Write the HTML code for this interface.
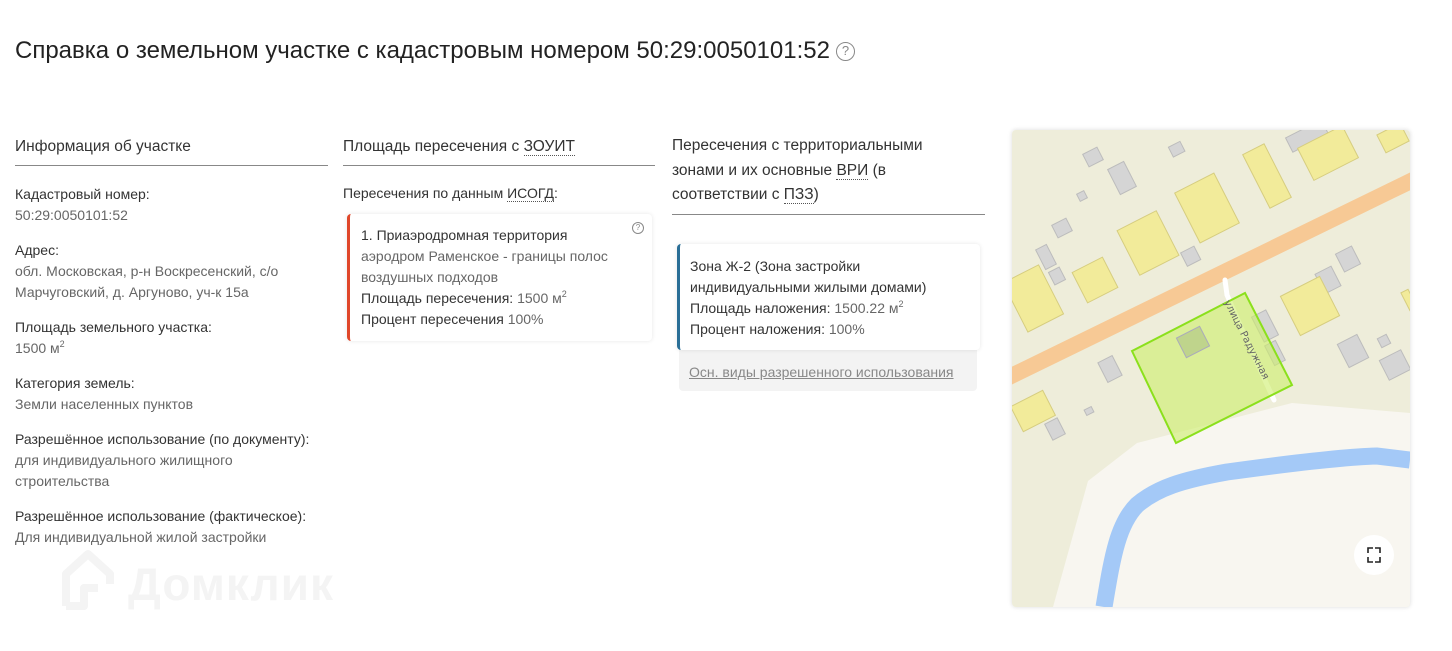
<!DOCTYPE html>
<html><head><meta charset="utf-8"><style>
*{margin:0;padding:0;box-sizing:border-box}
body{width:1452px;height:651px;background:#fff;font-family:"Liberation Sans","DejaVu Sans",sans-serif;color:#333;position:relative;overflow:hidden}
.abs{position:absolute}
h1{position:absolute;left:15px;top:37px;font-size:24px;font-weight:normal;color:#222;white-space:nowrap;letter-spacing:0px}
.q{display:inline-block;width:19px;height:19px;border:1.5px solid #888;border-radius:50%;font-size:13px;line-height:16px;text-align:center;color:#888;vertical-align:3px;margin-left:6px}
.hd{position:absolute;font-size:15.5px;color:#333;line-height:24.5px;border-bottom:1px solid #888}
.t{font-size:14px;line-height:21px}
.l{color:#333}.v{color:#666}
sup{font-size:9px;line-height:0;vertical-align:6px}
.dot{border-bottom:1px dotted #555}
.card{position:absolute;background:#fff;border-radius:4px;box-shadow:0 0 4px rgba(0,0,0,.1)}
</style></head><body>
<h1>Справка о земельном участке с кадастровым номером 50:29:0050101:52<span class="q">?</span></h1>

<div class="hd" style="left:15px;top:135px;width:313px;height:31px">Информация об участке</div>
<div class="hd" style="left:343px;top:135px;width:312px;height:31px">Площадь пересечения с <span class="dot">ЗОУИТ</span></div>
<div class="hd" style="left:672px;top:134px;width:313px;height:81px">Пересечения с территориальными<br>зонами и их основные <span class="dot">ВРИ</span> (в<br>соответствии с <span class="dot">ПЗЗ</span>)</div>

<div class="abs t" style="left:15px;top:184px;width:320px">
<div class="l">Кадастровый номер:</div><div class="v">50:29:0050101:52</div>
<div class="l" style="margin-top:14px">Адрес:</div><div class="v">обл. Московская, р-н Воскресенский, с/о<br>Марчуговский, д. Аргуново, уч-к 15а</div>
<div class="l" style="margin-top:14px">Площадь земельного участка:</div><div class="v">1500 м<sup>2</sup></div>
<div class="l" style="margin-top:14px">Категория земель:</div><div class="v">Земли населенных пунктов</div>
<div class="l" style="margin-top:14px">Разрешённое использование (по документу):</div><div class="v">для индивидуального жилищного<br>строительства</div>
<div class="l" style="margin-top:14px">Разрешённое использование (фактическое):</div><div class="v">Для индивидуальной жилой застройки</div>
</div>

<div class="abs t l" style="left:343px;top:183px">Пересечения по данным <span class="dot">ИСОГД</span>:</div>
<div class="card" style="left:347px;top:214px;width:305px;height:127px;border-left:3px solid #e0472a">
<div class="t" style="position:absolute;left:11px;top:11px;white-space:nowrap">
<div class="l">1. Приаэродромная территория</div>
<div class="v">аэродром Раменское - границы полос<br>воздушных подходов</div>
<div class="l">Площадь пересечения: <span class="v">1500 м<sup>2</sup></span></div>
<div class="l">Процент пересечения <span class="v">100%</span></div>
</div>
<div style="position:absolute;right:8px;top:8px;width:12px;height:12px;border:1px solid #888;border-radius:50%;font-size:8px;line-height:10px;text-align:center;color:#888">?</div>
</div>

<div class="abs" style="left:679px;top:340px;width:298px;height:51px;background:#f3f3f3;border-radius:4px"></div>
<div class="abs t" style="left:689px;top:362px;color:#888;text-decoration:underline">Осн. виды разрешенного использования</div>
<div class="card" style="left:677px;top:244px;width:303px;height:106px;border-left:3px solid #2a6f97">
<div class="t" style="position:absolute;left:10px;top:12px;white-space:nowrap">
<div class="l">Зона Ж-2 (Зона застройки<br>индивидуальными жилыми домами)</div>
<div class="l">Площадь наложения: <span class="v">1500.22 м<sup>2</sup></span></div>
<div class="l">Процент наложения: <span class="v">100%</span></div>
</div></div>

<!-- logo watermark -->
<svg class="abs" style="left:58px;top:548px" width="290" height="64">
<path d="M8 58 V26 L30 6 L52 26 V36 M8 58 H26 V40 H40" fill="none" stroke="#f4f4f4" stroke-width="8" stroke-linejoin="round"/>
<text x="70" y="52" font-family="Liberation Sans,sans-serif" font-weight="bold" font-size="46" fill="#f4f4f4" textLength="205">Домклик</text>
</svg>

<!-- map -->
<div class="abs" style="left:1012px;top:130px;width:398px;height:477px;border-radius:4px;overflow:hidden;box-shadow:0 0 5px rgba(0,0,0,.15)">
<svg width="398" height="477" viewBox="0 0 398 477">
<rect width="398" height="477" fill="#eeedda"/>
<polygon points="41,477 76,351 125,313 280,273 398,283 398,477" fill="#f8f6f0"/>
<path d="M-5 248 L405 48" stroke="#f7c995" stroke-width="16" fill="none"/>
<path d="M92 477 C100 430 105 395 125 375 C145 358 170 350 215 342 C280 333 330 327 365 326 L398 330" stroke="#a4c9f7" stroke-width="17" fill="none"/>
<path d="M213 150 L215 165 L240 222 L262 270" stroke="#fff" stroke-width="5" fill="none" stroke-linecap="round"/>
<g stroke="#bcbcbc" stroke-width="1" fill="#d5d5d5">
<rect x="-8" y="-7" width="16" height="14" transform="translate(81,27) rotate(-27)"/>
<rect x="-6" y="-5" width="13" height="11" transform="translate(164,19) rotate(-27)"/>
<rect x="-9" y="-14" width="18" height="28" transform="translate(110,48) rotate(-27)"/>
<rect x="-4" y="-4" width="8" height="8" transform="translate(70,66) rotate(-27)"/>
<rect x="-8" y="-7" width="16" height="14" transform="translate(50,98) rotate(-27)"/>
<rect x="-6" y="-11" width="12" height="22" transform="translate(34,127) rotate(-27)"/>
<rect x="-6" y="-7" width="12" height="14" transform="translate(45,146) rotate(-27)"/>
<rect x="-7" y="-7" width="15" height="15" transform="translate(178,126) rotate(-27)"/>
<rect x="-8" y="-11" width="16" height="22" transform="translate(98,239) rotate(-27)"/>
<rect x="-4" y="-3" width="8" height="6" transform="translate(77,281) rotate(-27)"/>
<rect x="-7" y="-9" width="14" height="18" transform="translate(43,299) rotate(-27)"/>
<rect x="-9" y="-10" width="18" height="20" transform="translate(336,129) rotate(-27)"/>
<rect x="-9" y="-11" width="18" height="22" transform="translate(316,150) rotate(-27)"/>
<rect x="-8" y="-14" width="16" height="28" transform="translate(253,196) rotate(-27)"/>
<rect x="-6" y="-11" width="12" height="22" transform="translate(263,223) rotate(-27)"/>
<rect x="-11" y="-13" width="22" height="26" transform="translate(341,221) rotate(-27)"/>
<rect x="-5" y="-5" width="10" height="10" transform="translate(372,211) rotate(-27)"/>
<rect x="-12" y="-11" width="24" height="22" transform="translate(383,235) rotate(-27)"/>
<rect x="-20" y="-8" width="40" height="16" transform="translate(295,6) rotate(-27)"/>
</g>
<g stroke="#d6cd7f" stroke-width="1" fill="#f2eb9a">
<rect x="-20" y="-27" width="40" height="55" transform="translate(21,168) rotate(-27)"/>
<rect x="-17" y="-17" width="34" height="34" transform="translate(83,150) rotate(-27)"/>
<rect x="-22" y="-25" width="44" height="50" transform="translate(136,113) rotate(-27)"/>
<rect x="-22" y="-28" width="44" height="56" transform="translate(195,78) rotate(-27)"/>
<rect x="-12" y="-30" width="24" height="60" transform="translate(255,46) rotate(-27)"/>
<rect x="-25" y="-18" width="50" height="36" transform="translate(316,23) rotate(-27)"/>
<rect x="-22" y="-22" width="44" height="44" transform="translate(298,176) rotate(-27)"/>
<rect x="-18" y="-14" width="36" height="28" transform="translate(21,281) rotate(-27)"/>
<rect x="-13" y="-10" width="26" height="20" transform="translate(381,8) rotate(-27)"/>
<rect x="-4" y="-10" width="8" height="20" transform="translate(397,170) rotate(-27)"/>
</g>
<polygon points="120,221 233,163 280,255 164,313" fill="#cdef6a" fill-opacity=".6" stroke="#8be01c" stroke-width="2"/>
<rect x="-13" y="-11" width="26" height="22" transform="translate(181,212) rotate(-27)" fill="#bfd48c" stroke="#aab"/>
<text x="0" y="0" font-size="10" fill="#666" transform="translate(212,172) rotate(63)" font-family="DejaVu Sans,sans-serif">улица Радужная</text>
<circle cx="362" cy="425" r="20" fill="#fff"/>
<path d="M356 423v-5h5M363 418h5v5M368 427v5h-5M361 432h-5v-5" fill="none" stroke="#222" stroke-width="1.6"/>
</svg>
</div>
</body></html>
